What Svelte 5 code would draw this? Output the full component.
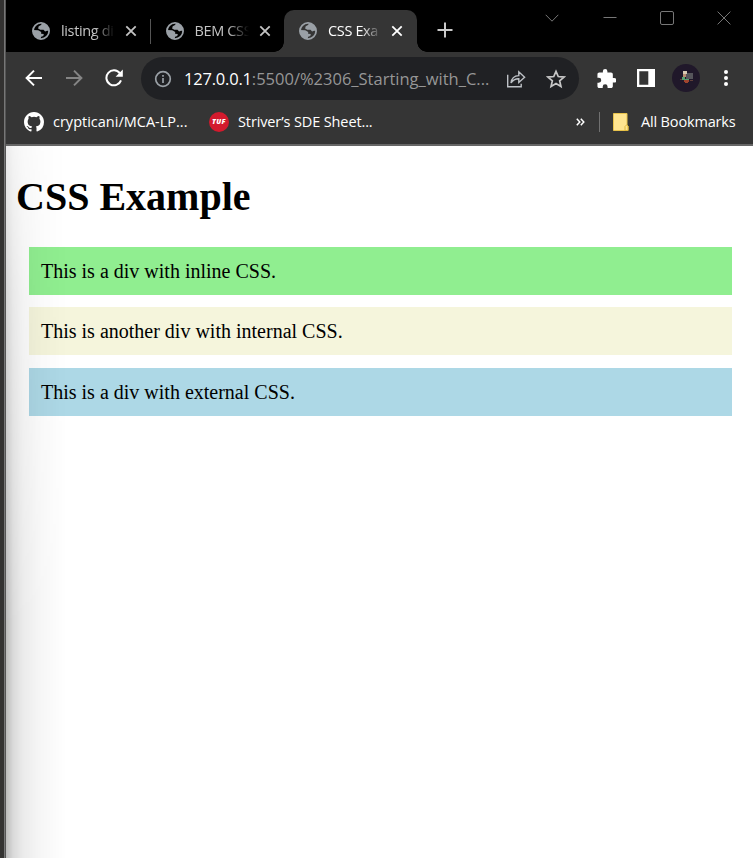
<script>
  const tabs = [
    { title: 'listing di', active: false },
    { title: 'BEM CSS', active: false },
    { title: 'CSS Exa', active: true }
  ];
  const boxes = [
    { text: 'This is a div with inline CSS.', kind: 'inline' },
    { text: 'This is another div with internal CSS.', kind: 'internal' },
    { text: 'This is a div with external CSS.', kind: 'external' }
  ];
</script>

<div class="screen">
  <div class="edge"></div>
  <div class="browser">
    <header class="tabbar">
      {#each tabs as tab, i}
        <div class="tab" class:active={tab.active}>
          <svg class="globe" viewBox="0 0 18 18" width="18" height="18">
            <circle cx="9" cy="9" r="8.1" fill="none" stroke="#9aa0a6" stroke-width="1.8" />
            <path d="M10.2 1 9 3.1 6.7 4.2 6.1 6.6 8.3 7.7h3.2l1.6 1.7 2-.6L17 9A8 8 0 0 0 10.2 1ZM1 8l5.2.3 3 1.7-.1 1.8 2.7.2-.5 2.1-2.1.6L8.5 17A8 8 0 0 1 1 8Z" fill="#9aa0a6" />
          </svg>
          <span class="title">{tab.title}</span>
          <svg class="close" viewBox="0 0 12 12" width="12" height="12"><path d="m1.3 1.3 9.4 9.4m0-9.4-9.4 9.4" stroke="currentColor" stroke-width="1.8" /></svg>
          {#if i === 0}<i class="divider"></i>{/if}
        </div>
      {/each}
      <svg class="plus" viewBox="0 0 16 16" width="16" height="16"><path d="M8 .5v15M.5 8h15" stroke="#c9c9c9" stroke-width="2" /></svg>
      <div class="controls">
        <svg viewBox="0 0 14 14" width="14" height="14"><path d="m.7 3.8 6.3 6.4 6.3-6.4" /></svg>
        <svg viewBox="0 0 14 14" width="14" height="14"><path d="M.5 6.5h13" /></svg>
        <svg viewBox="0 0 14 14" width="14" height="14"><rect x=".5" y=".5" width="13" height="13" rx="1.5" /></svg>
        <svg viewBox="0 0 14 14" width="14" height="14"><path d="m.6.6 12.8 12.8m0-12.8L.6 13.4" /></svg>
      </div>
    </header>

    <nav class="toolbar">
      <svg class="back" viewBox="0 0 18 18" width="18" height="18"><path d="M17 9H2M9 1.6 1.6 9 9 16.4" fill="none" stroke="#fff" stroke-width="2" /></svg>
      <svg class="forward" viewBox="0 0 18 18" width="18" height="18"><path d="M1 9h15M9 1.6 16.4 9 9 16.4" fill="none" stroke="#858585" stroke-width="2" /></svg>
      <svg class="reload" viewBox="0 0 18 18" width="18" height="18"><path d="M14.9 4.3A7.5 7.5 0 1 0 16 11.3" fill="none" stroke="#fff" stroke-width="2" /><path d="M17.8.6v7.2h-7.2Z" fill="#fff" /></svg>
      <div class="address">
        <svg viewBox="0 0 18 18" width="18" height="18"><circle cx="9" cy="9" r="7.3" fill="none" stroke="#9aa0a6" stroke-width="1.7" /><path d="M9 8v5M9 5v1.8" stroke="#9aa0a6" stroke-width="1.7" /></svg>
        <span class="url"><b>127.0.0.1</b>:5500/%2306_Starting_with_C...</span>
        <svg class="share" viewBox="0 0 20 20" width="20" height="20"><path d="M1.7 5.8v12h13.500v-3M5 14c.5-4.600 3-7.200 7.800-7.400V2.800l5.800 5.500-5.800 5.200v-3.700C9.300 9.700 6.900 11 5 14Z" fill="none" stroke="#bdc1c6" stroke-width="1.400" /></svg>
        <svg class="star" viewBox="0 0 20 20" width="20" height="20"><path d="m10 2.300 2.250 5.250 5.750.5-4.350 3.750 1.300 5.600L10 14.450 5.050 17.400l1.300-5.600L2 8.050l5.750-.5Z" fill="none" stroke="#c7c7c7" stroke-width="1.700" /></svg>
      </div>
      <svg class="puzzle" viewBox="1.500 1 21 21" width="19" height="19"><path d="M20.500 11H19V7c0-1.100-.9-2-2-2h-4V3.500a2.500 2.500 0 0 0-5 0V5H4c-1.100 0-2 .9-2 2v3.800h1.500a2.700 2.700 0 0 1 0 5.400H2V20c0 1.100.9 2 2 2h3.800v-1.500a2.700 2.700 0 0 1 5.400 0V22H17c1.100 0 2-.9 2-2v-4h1.500a2.500 2.500 0 0 0 0-5Z" fill="#fff" /></svg>
      <svg class="panel" viewBox="0 0 18 18" width="18" height="18"><path fill-rule="evenodd" d="M0 0h18v18H0ZM2.300 2.300v13.400h9V2.300Z" fill="#fff" /></svg>
      <svg class="avatar" viewBox="0 0 28 28" width="28" height="28">
        <circle cx="14" cy="14" r="14" fill="#20182a" />
        <path d="M14 9h7v6h-7Z" fill="#56555b" />
        <path d="M11 7h4v3h-4Z" fill="#d8c9b2" />
        <path d="M11 10h3v3h-3Z" fill="#b98d72" />
        <path d="M10 13h3v2h4v1h-7Z" fill="#55a070" />
        <path d="M12 16h5v2h-1v1h-3v-1h-1Z" fill="#a0442e" />
        <path d="M8 15h2v1H8ZM18 16h3v1h-3Z" fill="#61403a" />
      </svg>
      <svg class="more" viewBox="0 0 4 18" width="4" height="18"><circle cx="2" cy="3" r="2" /><circle cx="2" cy="9" r="2" /><circle cx="2" cy="15" r="2" /></svg>
    </nav>

    <div class="bookmarks">
      <svg class="github" viewBox="0 0 16 16" width="20" height="20"><path fill="#fff" d="M8 0C3.580 0 0 3.580 0 8c0 3.540 2.290 6.530 5.470 7.590.4.070.55-.17.55-.38 0-.19-.01-.82-.01-1.490-2.010.37-2.530-.49-2.690-.94-.09-.23-.48-.94-.82-1.130-.28-.15-.68-.52-.01-.53.63-.01 1.080.58 1.230.82.72 1.210 1.870.87 2.330.66.07-.52.28-.87.51-1.070-1.780-.2-3.640-.89-3.640-3.950 0-.87.31-1.590.82-2.150-.08-.2-.36-1.020.08-2.120 0 0 .67-.21 2.200.82a7.600 7.600 0 0 1 4 0c1.530-1.040 2.200-.82 2.200-.82.44 1.100.16 1.920.08 2.120.51.56.82 1.270.82 2.150 0 3.070-1.870 3.750-3.650 3.950.29.25.54.73.54 1.480 0 1.070-.01 1.930-.01 2.200 0 .21.15.46.55.38A8.010 8.010 0 0 0 16 8c0-4.420-3.580-8-8-8Z" /></svg>
      <span class="mark repo">crypticani/MCA-LP...</span>
      <span class="tuf">TUF</span>
      <span class="mark sheet">Striver’s SDE Sheet...</span>
      <svg class="overflow" viewBox="0 0 9 8" width="9" height="8"><path d="m.8.8 3 3.200-3 3.200M4.800.8l3 3.200-3 3.200" fill="none" stroke="#fff" stroke-width="1.500" /></svg>
      <i class="rule"></i>
      <svg class="folder" viewBox="0 0 16 18" width="16" height="18"><path d="M.5.5h13.500v11.500l1 1v4.500H.5Z" fill="#ffe590" stroke="#e8c34c" /><path d="M12 17.500v-4l1.500-1.500 1.500 1v4.500Z" fill="#ffe590" stroke="#e0b93c" /></svg>
      <span class="mark all">All Bookmarks</span>
    </div>

    <main class="page">
      <h1>CSS Example</h1>
      {#each boxes as box}
        <div class="box {box.kind}">{box.text}</div>
      {/each}
    </main>
  </div>
</div>

<style>
  :global(body) { margin: 0; background: #fff; }
  .screen { width: 753px; height: 858px; display: flex; overflow: hidden; font-family: "Open Sans", "Noto Sans", sans-serif; }
  .edge { flex: none; width: 6px; background: linear-gradient(90deg, #333231 0 4px, #777 4px 5px, #555 5px); }
  .browser { flex: 1; min-width: 0; display: flex; flex-direction: column; background: #353535; }
  svg { display: block; flex: none; }
  .tabbar { height: 52px; box-sizing: border-box; padding: 10px 0 0 11px; background: #000; display: flex; }
  .tab { position: relative; width: 133.500px; height: 42px; box-sizing: border-box; padding-left: 15px; display: flex; align-items: center; color: #c4c4c4; }
  .tab.active { width: 133px; background: #353535; color: #fff; border-radius: 10px 10px 0 0; }
  .tab.active::before, .tab.active::after { content: ""; position: absolute; bottom: 0; width: 10px; height: 10px; }
  .tab.active::before { left: -10px; background: radial-gradient(circle at 0 0, #000 9.500px, #353535 10px); }
  .tab.active::after { right: -10px; background: radial-gradient(circle at 100% 0, #000 9.500px, #353535 10px); }
  .title { width: 55px; margin-left: 11px; white-space: nowrap; font-size: 14.500px; line-height: 22px; letter-spacing: -.35px; -webkit-mask-image: linear-gradient(90deg, #000 60%, transparent 98%); mask-image: linear-gradient(90deg, #000 60%, transparent 98%); }
  .close { margin-left: 9px; }
  .active .close { margin-left: 8px; }
  .divider { position: absolute; right: 0; top: 9px; width: 1px; height: 25px; background: #555; }
  .plus { margin: 12px 0 0 20px; }
  .controls { margin: 1px 22px 0 auto; display: flex; gap: 43.200px; }
  .controls svg { fill: none; stroke: #777; stroke-width: 1; }
  .toolbar { height: 53px; display: flex; align-items: center; padding-left: 19px; }
  .toolbar > svg { margin-top: -1px; }
  .forward, .reload { margin-left: 22px; }
  .address { width: 438px; height: 43px; box-sizing: border-box; margin-left: 18px; padding-left: 13px; border-radius: 22px; display: flex; align-items: center; background: #202124; }
  .url { width: 310px; margin-left: 12px; white-space: nowrap; font-size: 16.500px; line-height: 24px; letter-spacing: 0; color: #969696; }
  .url b { font-weight: 400; color: #fff; letter-spacing: -.2px; }
  .share { margin-left: 12px; }
  .star { margin-left: 20px; }
  .puzzle { margin-left: 18px; }
  .panel { margin-left: 21px; }
  .avatar { margin-left: 17px; }
  .more { margin-left: 24px; fill: #fff; }
  .bookmarks { height: 41px; box-sizing: border-box; border-bottom: 2px solid #666; padding: 0 0 6px 18px; display: flex; align-items: center; color: #fff; }
  .mark { white-space: nowrap; font-size: 14.500px; line-height: 22px; }
  .repo { width: 136px; margin-left: 9px; letter-spacing: 0; }
  .tuf { width: 20px; height: 20px; margin-left: 20px; border-radius: 50%; background: #d31a2d; color: #fff; text-align: center; font: italic 800 7px/20px "Open Sans", sans-serif; letter-spacing: .4px; }
  .sheet { width: 136px; margin-left: 9px; letter-spacing: -.12px; }
  .overflow { margin-left: 202px; }
  .rule { width: 1px; height: 20px; margin-left: 14px; background: #707070; }
  .folder { margin-left: 13px; }
  .all { margin-left: 12px; letter-spacing: -.16px; }
  .page { position: relative; flex: 1; padding: 28px 21px 0 10px; color: #000; font-family: "Liberation Serif", serif; background: #fff; }
  /* Side shadow that deepens toward the bottom of the window. */
  .page::after { content: ""; position: absolute; inset: 0 auto 0 0; width: 64px; pointer-events: none; background: linear-gradient(90deg, rgba(0,0,0,.27) 0, rgba(0,0,0,.15) 7px, rgba(0,0,0,.08) 17px, rgba(0,0,0,.03) 36px, transparent 60px); -webkit-mask-image: linear-gradient(rgba(0,0,0,.3), rgba(0,0,0,.6) 150px, #000 480px); mask-image: linear-gradient(rgba(0,0,0,.3), rgba(0,0,0,.6) 150px, #000 480px); }
  h1 { margin: 0 0 27px; font-size: 40px; line-height: 46px; font-weight: 700; }
  .box { height: 48px; box-sizing: border-box; margin: 0 0 12.400px 13px; padding-left: 12px; font-size: 20px; line-height: 48px; }
  .inline { background: #90ee90; }
  .internal { background: #f5f5dc; }
  .external { background: #add8e6; }
</style>
